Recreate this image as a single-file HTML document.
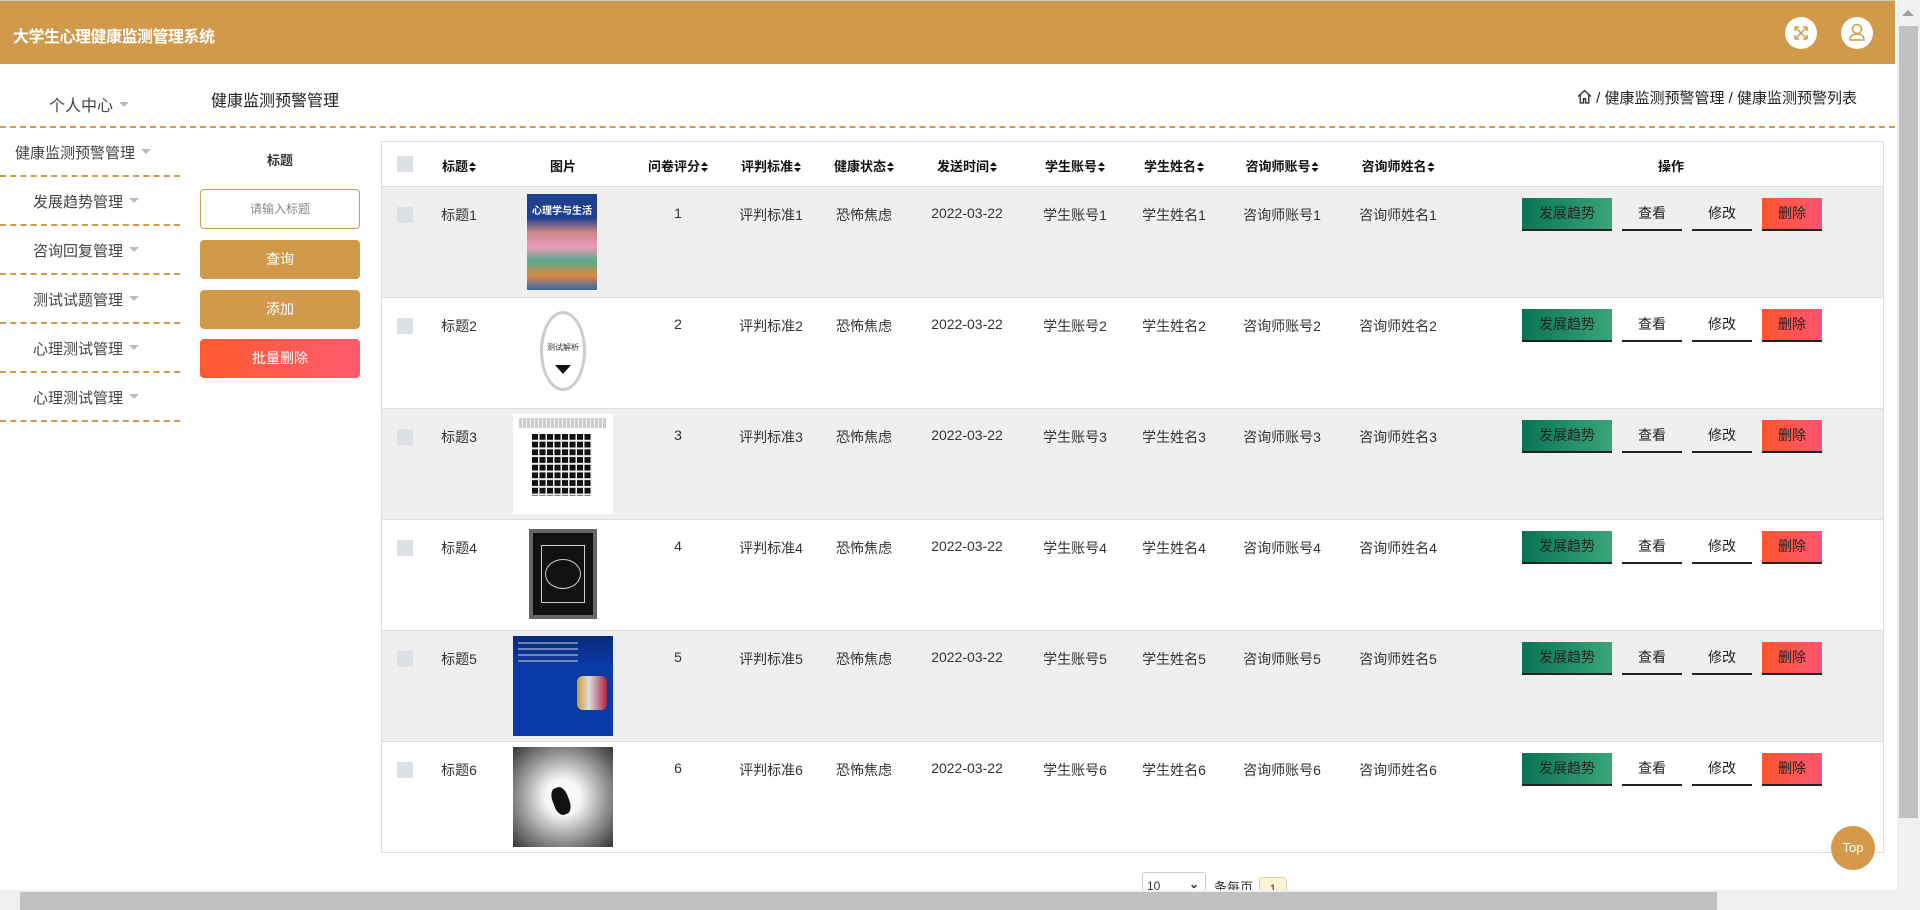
<!DOCTYPE html>
<html><head><meta charset="utf-8">
<style>
*{margin:0;padding:0;box-sizing:border-box}
body{width:1920px;height:910px;overflow:hidden;background:#fff;font-family:"Liberation Sans","Noto Sans CJK SC",sans-serif;color:#333;position:relative}
.a{position:absolute}
.hdr{left:0;top:0;width:1895px;height:64px;background:#d19a4b;border-top:1px solid #ccc}
.hdr .t{left:13px;top:22px;color:#fff;font-size:16px;font-weight:bold;letter-spacing:-0.5px}
.circ{width:32px;height:32px;border-radius:50%;background:#fff;top:16px}
.dash{height:0;border-top:2px dashed #d19a4b}
.menu{font-size:15px;color:#444;white-space:nowrap}
.menu:after{content:"";display:inline-block;margin-left:6px;border:5px solid transparent;border-top:5px solid #bbb;vertical-align:-1px}
.btn{left:200px;width:160px;height:39px;border-radius:4px;color:#fff;font-size:14px;text-align:center;line-height:39px}
.tbl{left:381px;top:141px;width:1503px;height:712px;border:1px solid #ddd}
.row{left:0;width:1501px;height:111px;border-top:1px solid #ddd}
.c{position:absolute;font-size:14px;white-space:nowrap;transform:translateX(-50%)}
.h{font-weight:bold;color:#111;font-size:13px;top:14px}
.s:after{content:"";display:inline-block;width:7px;height:10px;margin-left:1px;vertical-align:-1px;
 clip-path:polygon(50% 0,100% 40%,0 40%,0 60%,100% 60%,50% 100%,0 60%,0 40%);background:#111}
.cb{position:absolute;left:15px;width:16px;height:16px;background:#dde0e5;top:20px}
.b{position:absolute;top:11px;height:33px;line-height:31px;font-size:14px;text-align:center;border-bottom:2px solid #222;color:#222}
.img{position:absolute;left:131px;top:5px;width:100px;height:100px;overflow:hidden}
</style></head><body>
<div class="a hdr"><div class="a t">大学生心理健康监测管理系统</div>
<div class="a circ" style="left:1785px"><svg width="32" height="32" viewBox="0 0 32 32" fill="none" stroke="#d19a4b" stroke-width="1.5"><path d="M10 10l12 12M22 10L10 22M10 10h4M10 10v4M22 10h-4M22 10v4M10 22h4M10 22v-4M22 22h-4M22 22v-4"/></svg></div>
<div class="a circ" style="left:1841px"><svg width="32" height="32" viewBox="0 0 32 32" fill="none" stroke="#d19a4b" stroke-width="1.5"><circle cx="16" cy="12" r="4.5"/><path d="M9 23c0-4 3-6 7-6s7 2 7 6z"/></svg></div>
</div>
<div class="a menu" style="left:49px;top:92px;font-size:16px">个人中心</div>
<div class="a" style="left:211px;top:87px;font-size:16px;color:#222">健康监测预警管理</div>
<div class="a" style="left:1577px;top:87px;font-size:15px;color:#222;white-space:nowrap"><svg width="15" height="15" viewBox="0 0 14 14" fill="none" stroke="#333" stroke-width="1.3" style="vertical-align:-1px"><path d="M1 7L7 1.5 13 7M3 5.5V13h3V9h2v4h3V5.5"/></svg> / 健康监测预警管理 / 健康监测预警列表</div>
<div class="a dash" style="left:0;top:126px;width:1895px"></div>
<div class="a menu" style="left:15px;top:142px">健康监测预警管理</div>
<div class="a dash" style="left:0;top:175px;width:180px"></div>
<div class="a menu" style="left:33px;top:191px">发展趋势管理</div>
<div class="a dash" style="left:0;top:224px;width:180px"></div>
<div class="a menu" style="left:33px;top:240px">咨询回复管理</div>
<div class="a dash" style="left:0;top:273px;width:180px"></div>
<div class="a menu" style="left:33px;top:289px">测试试题管理</div>
<div class="a dash" style="left:0;top:322px;width:180px"></div>
<div class="a menu" style="left:33px;top:338px">心理测试管理</div>
<div class="a dash" style="left:0;top:371px;width:180px"></div>
<div class="a menu" style="left:33px;top:387px">心理测试管理</div>
<div class="a dash" style="left:0;top:420px;width:180px"></div>

<div class="a" style="left:200px;top:150px;width:160px;text-align:center;font-size:13px;font-weight:bold;color:#333">标题</div>
<div class="a" style="left:200px;top:189px;width:160px;height:40px;border:1px solid #d19a4b;border-radius:4px;text-align:center;line-height:38px;font-size:12px;color:#888">请输入标题</div>
<div class="a btn" style="top:240px;background:#d19a4b">查询</div>
<div class="a btn" style="top:290px;background:#d19a4b">添加</div>
<div class="a btn" style="top:339px;background:linear-gradient(90deg,#ff5a2e,#ff5a6e)">批量删除</div>

<div class="a tbl">
<div class="a" style="left:0;top:0;width:1501px;height:44px">
<div class="cb" style="top:14px"></div>
<span class="c h s" style="left:77px">标题</span>
<span class="c h" style="left:181px">图片</span>
<span class="c h s" style="left:296px">问卷评分</span>
<span class="c h s" style="left:389px">评判标准</span>
<span class="c h s" style="left:482px">健康状态</span>
<span class="c h s" style="left:585px">发送时间</span>
<span class="c h s" style="left:693px">学生账号</span>
<span class="c h s" style="left:792px">学生姓名</span>
<span class="c h s" style="left:900px">咨询师账号</span>
<span class="c h s" style="left:1016px">咨询师姓名</span>
<span class="c h" style="left:1289px">操作</span>
</div>
<div class="a row" style="top:44px;background:#efefef" id="r1"></div>
</div>

<div class="a" style="left:1142px;top:872px;width:64px;height:30px;border:1px solid #ccc;border-radius:3px;font-size:12px;padding:6px 4px">10<span style="position:absolute;right:6px;top:4px;font-weight:bold">⌄</span></div>
<div class="a" style="left:1214px;top:877px;font-size:13px">条每页</div>
<div class="a" style="left:1259px;top:877px;width:28px;height:24px;background:#fdf3d6;border:1px solid #e0d2a8;border-radius:3px;font-size:12px;text-align:center;line-height:22px">1</div>

<div class="a" style="left:1831px;top:826px;width:44px;height:44px;border-radius:50%;background:#d4994a;color:#fff;font-size:13px;text-align:center;line-height:44px">Top</div>

<div class="a" style="left:0;top:890px;width:1897px;height:20px;background:#f0f0f0"></div>
<div class="a" style="left:20px;top:892px;width:1697px;height:18px;background:#c1c1c1"></div>
<div class="a" style="left:1897px;top:0;width:23px;height:910px;background:#f0f0f0"></div>
<div class="a" style="left:1899px;top:26px;width:19px;height:792px;background:#c1c1c1"></div>
<div class="a" style="left:1902px;top:10px;border:6px solid transparent;border-bottom:6px solid #a3a3a3;border-top:0"></div>

<script>
var imgs=[
'<div style="position:absolute;left:14px;top:2px;width:70px;height:96px;background:linear-gradient(180deg,#1f3f8f 0,#1f3f8f 25%,#c88 40%,#e9b 55%,#5a8 70%,#d84 85%,#36a 100%)"><div style="color:#fff;font-size:10px;text-align:center;margin-top:8px;font-weight:bold">心理学与生活</div></div>',
'<div style="width:100px;height:100px;background:#fff"><div style="position:absolute;left:27px;top:8px;width:46px;height:80px;border:3px solid #ccc;border-radius:50%;font-size:8px;text-align:center;padding-top:28px;color:#333">测试解析</div><div style="position:absolute;left:42px;top:62px;border:8px solid transparent;border-top:9px solid #111"></div></div>',
'<div style="width:100px;height:100px;background:#fff"><div style="position:absolute;left:19px;top:20px;width:60px;height:62px;background:#111;background-image:linear-gradient(90deg,transparent 6px,#eee 6px,#eee 7.5px,transparent 7.5px),linear-gradient(transparent 6px,#eee 6px,#eee 7.5px,transparent 7.5px);background-size:7.5px 7.7px"></div><div style="position:absolute;left:6px;top:4px;width:88px;height:10px;background:repeating-linear-gradient(90deg,#999 0 3px,#fff 3px 4px);opacity:.5"></div></div>',
'<div style="width:100px;height:100px;background:#fff"><div style="position:absolute;left:16px;top:4px;width:68px;height:90px;background:#111;border:4px solid #666"><div style="position:absolute;left:8px;top:12px;width:44px;height:58px;border:1px solid #ccc"></div><div style="position:absolute;left:12px;top:26px;width:36px;height:30px;border:1px solid #ccc;border-radius:50%"></div></div></div>',
'<div style="width:100px;height:100px;background:linear-gradient(180deg,#0a2a7a,#0a3aa8 30%,#0a3aa8)"><div style="position:absolute;left:5px;top:6px;width:60px;height:24px;background:repeating-linear-gradient(180deg,#9ab 0 2px,transparent 2px 6px);opacity:.7"></div><div style="position:absolute;left:64px;top:40px;width:30px;height:34px;background:linear-gradient(90deg,#c93 0,#ddd 40%,#a24 100%);border-radius:6px"></div></div>',
'<div style="width:100px;height:100px;background:radial-gradient(circle at 50% 50%,#fff 0,#f6f6f6 25%,#999 60%,#333 100%)"><div style="position:absolute;left:40px;top:40px;width:16px;height:28px;background:#111;border-radius:40%;transform:rotate(-20deg)"></div></div>'
];
var h='';
for(var i=0;i<6;i++){var n=i+1;
h+='<div class="a row" style="top:'+(44+i*111)+'px;background:'+(i%2==0?'#efefef':'#fff')+'">'+
'<div class="cb"></div>'+
'<span class="c" style="left:77px;top:18px">标题'+n+'</span>'+
'<div class="img">'+imgs[i]+'</div>'+
'<span class="c" style="left:296px;top:18px">'+n+'</span>'+
'<span class="c" style="left:389px;top:18px">评判标准'+n+'</span>'+
'<span class="c" style="left:482px;top:18px">恐怖焦虑</span>'+
'<span class="c" style="left:585px;top:18px">2022-03-22</span>'+
'<span class="c" style="left:693px;top:18px">学生账号'+n+'</span>'+
'<span class="c" style="left:792px;top:18px">学生姓名'+n+'</span>'+
'<span class="c" style="left:900px;top:18px">咨询师账号'+n+'</span>'+
'<span class="c" style="left:1016px;top:18px">咨询师姓名'+n+'</span>'+
'<div class="b" style="left:1140px;width:90px;background:linear-gradient(90deg,#0a7355,#3aa57a)">发展趋势</div>'+
'<div class="b" style="left:1240px;width:60px">查看</div>'+
'<div class="b" style="left:1310px;width:60px">修改</div>'+
'<div class="b" style="left:1380px;width:60px;background:linear-gradient(90deg,#ff5530,#ff5570)">删除</div>'+
'</div>';}
document.getElementById('r1').outerHTML=h;
</script>
</body></html>
